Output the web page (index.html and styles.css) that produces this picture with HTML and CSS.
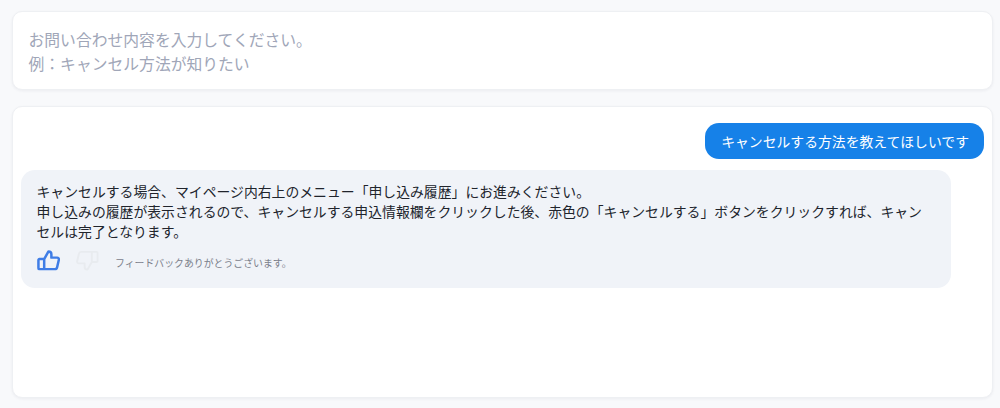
FILE: index.html
```html
<!DOCTYPE html>
<html lang="ja">
<head>
<meta charset="utf-8">
<title>お問い合わせ</title>
<link rel="stylesheet" href="styles.css">
</head>
<body>
<main class="page">
  <section class="card input-card">
    <p>お問い合わせ内容を入力してください。</p>
    <p>例：キャンセル方法が知りたい</p>
  </section>
  <section class="card chat-card">
    <div class="user-row"><div class="user-bubble">キャンセルする方法を教えてほしいです</div></div>
    <div class="bot-bubble">
      <p class="bot-text">キャンセルする場合、マイページ内右上のメニュー「申し込み履歴」にお進みください。<br>申し込みの履歴が表示されるので、キャンセルする申込情報欄をクリックした後、赤色の「キャンセルする」ボタンをクリックすれば、キャンセルは完了となります。</p>
      <div class="feedback">
        <svg class="icon" viewBox="0 0 24 24" fill="none" stroke="#3f7de6" stroke-width="2.600" stroke-linejoin="round" stroke-linecap="round"><path d="M7.500 10.500V21H2.500a1 1 0 0 1-1-1v-8.500a1 1 0 0 1 1-1h5l4.500-8c1.800 0 3 1.300 3 3v3.500h6a1.800 1.800 0 0 1 1.800 2.200l-1.800 7.800a2.500 2.500 0 0 1-2.400 2H7.500"/></svg>
        <svg class="icon icon-off" viewBox="0 0 24 24" fill="none" stroke="#e8ebef" stroke-width="2" stroke-linejoin="round" stroke-linecap="round"><path d="M16.500 13.500V3h5a1 1 0 0 1 1 1v8.500a1 1 0 0 1-1 1h-5l-4.500 8c-1.800 0-3-1.300-3-3V15H3a1.800 1.800 0 0 1-1.800-2.200L3 5a2.500 2.500 0 0 1 2.400-2h11.100"/></svg>
        <span class="thanks">フィードバックありがとうございます。</span>
      </div>
    </div>
  </section>
</main>
</body>
</html>
```

FILE: styles.css
```css
* { box-sizing: border-box; }
html, body { margin: 0; height: 408px; overflow: hidden; }
body {
  background: #f8f9fb;
  font-family: "Noto Sans CJK JP", "Noto Sans", sans-serif;
  color: #1f2530;
}
p { margin: 0; }
.page {
  display: flex;
  flex-direction: column;
  gap: 16px;
  height: 408px;
  padding: 11px 7px 10px 12px;
}
.card {
  background: #fff;
  border: 1px solid #eef0f3;
  border-radius: 10px;
  box-shadow: 0 1px 3px rgba(30, 40, 60, .06);
}
.input-card {
  height: 79px;
  padding: 16px 15.500px;
  font-size: 15.800px;
  line-height: 23.500px;
  color: #a0a6b8;
}
.chat-card {
  flex: 1;
  padding: 16px 8px 8px;
  display: flex;
  flex-direction: column;
  gap: 11px;
}
.user-row { display: flex; justify-content: flex-end; }
.user-bubble {
  height: 36px;
  padding: 0 15px 0 16px;
  display: flex;
  align-items: center;
  background: #1681e8;
  color: #fff;
  border-radius: 14px;
  font-size: 13.830px;
}
.bot-bubble {
  width: 930px;
  height: 118px;
  padding: 11px 24px 11px 15.500px;
  background: #f0f3f8;
  border-radius: 14px;
}
.bot-text { font-size: 13.850px; line-height: 20.200px; color: #20242c; }
.feedback { display: flex; align-items: center; margin-top: 7.500px; }
.icon { width: 23px; height: 23px; display: block; }
.icon-off { margin-left: 16px; }
.thanks { margin: 4px 0 0 16.500px; font-size: 9.900px; color: #7b808b; }
```
